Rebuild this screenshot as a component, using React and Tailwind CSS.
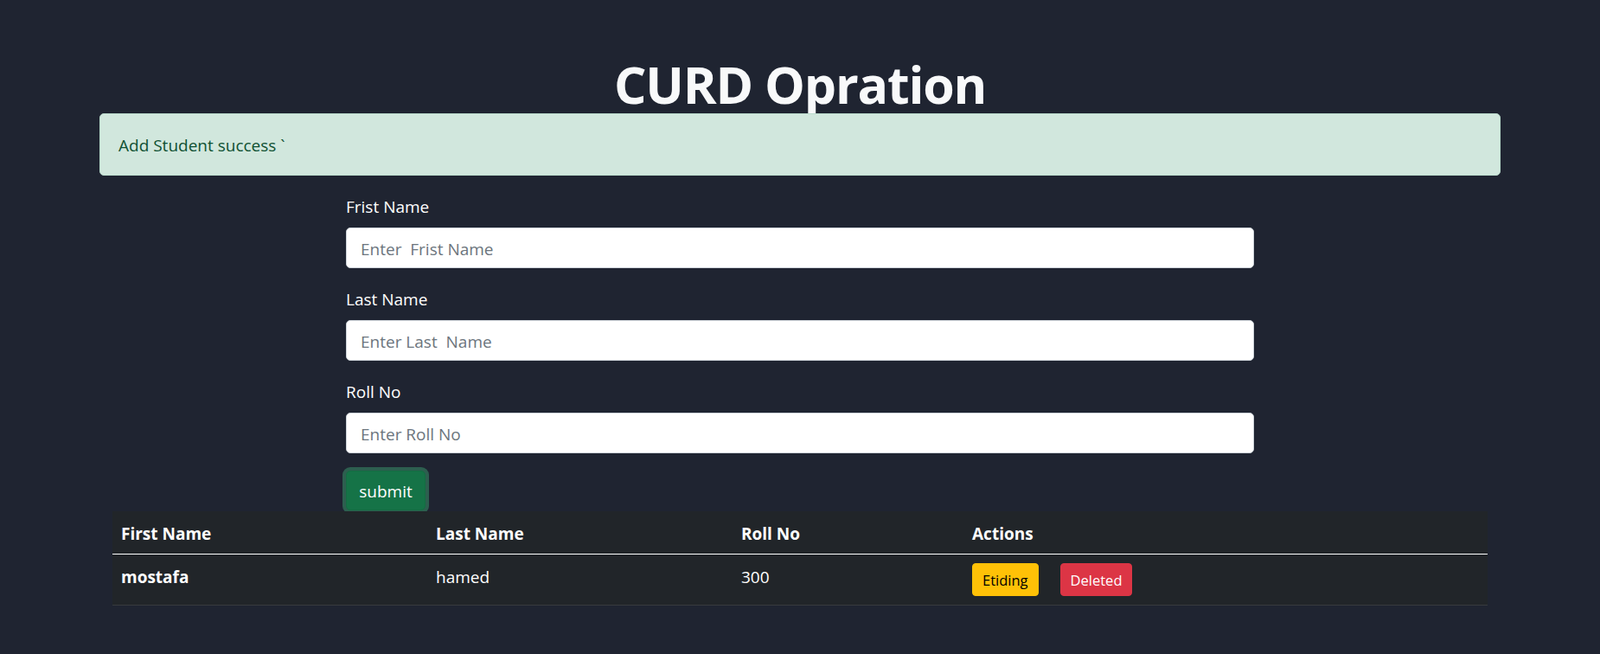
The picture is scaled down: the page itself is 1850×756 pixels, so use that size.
import React from "react";

const fields = [
  { label: "Frist Name", placeholder: "Enter  Frist Name" },
  { label: "Last Name", placeholder: "Enter Last  Name" },
  { label: "Roll No", placeholder: "Enter Roll No" },
];

const students = [{ first: "mostafa", last: "hamed", roll: "300" }];

export default function App() {
  return (
    <div className="min-h-screen bg-[#1f2431] font-['Open_Sans',sans-serif] text-white pt-[68px]">
      <h1 className="h-[58px] text-center text-[59px] font-bold leading-[58px] tracking-[-1.2px] text-[#f8f9fa]">
        CURD Opration
      </h1>

      {/* alert */}
      <div className="relative mx-[115px] mt-[5px] flex h-[72px] items-center rounded-[5px] border border-[#badbcc] bg-[#d1e7dd] px-[21px] pt-[2px] text-[19px] text-[#0f5132]">
        Add Student success `
      </div>

      <form className="mx-auto mt-[21px] w-[1050px]">
        {fields.map((f, i) => (
          <div key={f.label} className={i > 0 ? "mt-[21px]" : ""}>
            <label className="mb-[9px] block pt-[1px] text-[19px] leading-[29px]">{f.label}</label>
            <input
              type="text"
              placeholder={f.placeholder}
              className="block h-[47px] w-full rounded-[5px] border border-[#ced4da] bg-white px-[16px] pt-[2px] text-[19px] text-[#212529] outline-none placeholder:text-[#6c757d]"
            />
          </div>
        ))}
        <button
          type="button"
          className="mt-[20px] flex h-[46px] w-[92px] items-center justify-center rounded-[5px] border border-[#146c43] bg-[#157347] pt-[2px] text-[19px] leading-[29px] text-white shadow-[0_0_0_4px_rgba(60,153,110,0.5)]"
        >
          submit
        </button>
      </form>

      <table className="relative mx-auto mt-[1px] w-[1590px] table-fixed border-collapse bg-[#212529] text-left text-[19px] leading-[29px]">
        <colgroup>
          <col className="w-[364px]" />
          <col className="w-[353px]" />
          <col className="w-[267px]" />
          <col />
        </colgroup>
        <thead>
          <tr className="border-b border-white">
            <th className="px-[10px] pt-[12px] pb-[8px] font-bold">First Name</th>
            <th className="px-[10px] pt-[12px] pb-[8px] font-bold">Last Name</th>
            <th className="px-[10px] pt-[12px] pb-[8px] font-bold">Roll No</th>
            <th className="px-[10px] pt-[12px] pb-[8px] font-bold">Actions</th>
          </tr>
        </thead>
        <tbody>
          {students.map((s) => (
            <tr key={s.roll} className="border-b border-[#373b3e]">
              <td className="px-[10px] pt-[12px] pb-[8px] align-top font-bold">{s.first}</td>
              <td className="px-[10px] pt-[12px] pb-[8px] align-top">{s.last}</td>
              <td className="px-[10px] pt-[12px] pb-[8px] align-top">{s.roll}</td>
              <td className="px-[10px] py-[10px] align-top">
                <div className="flex gap-[25px]">
                  <button className="flex h-[38px] items-center rounded-[4px] border border-[#ffc107] bg-[#ffc107] px-[11px] pt-[1px] text-[16.5px] text-black">
                    Etiding
                  </button>
                  <button className="flex h-[38px] items-center rounded-[4px] border border-[#dc3545] bg-[#dc3545] px-[11px] pt-[1px] text-[16.5px] text-white">
                    Deleted
                  </button>
                </div>
              </td>
            </tr>
          ))}
        </tbody>
      </table>
    </div>
  );
}
